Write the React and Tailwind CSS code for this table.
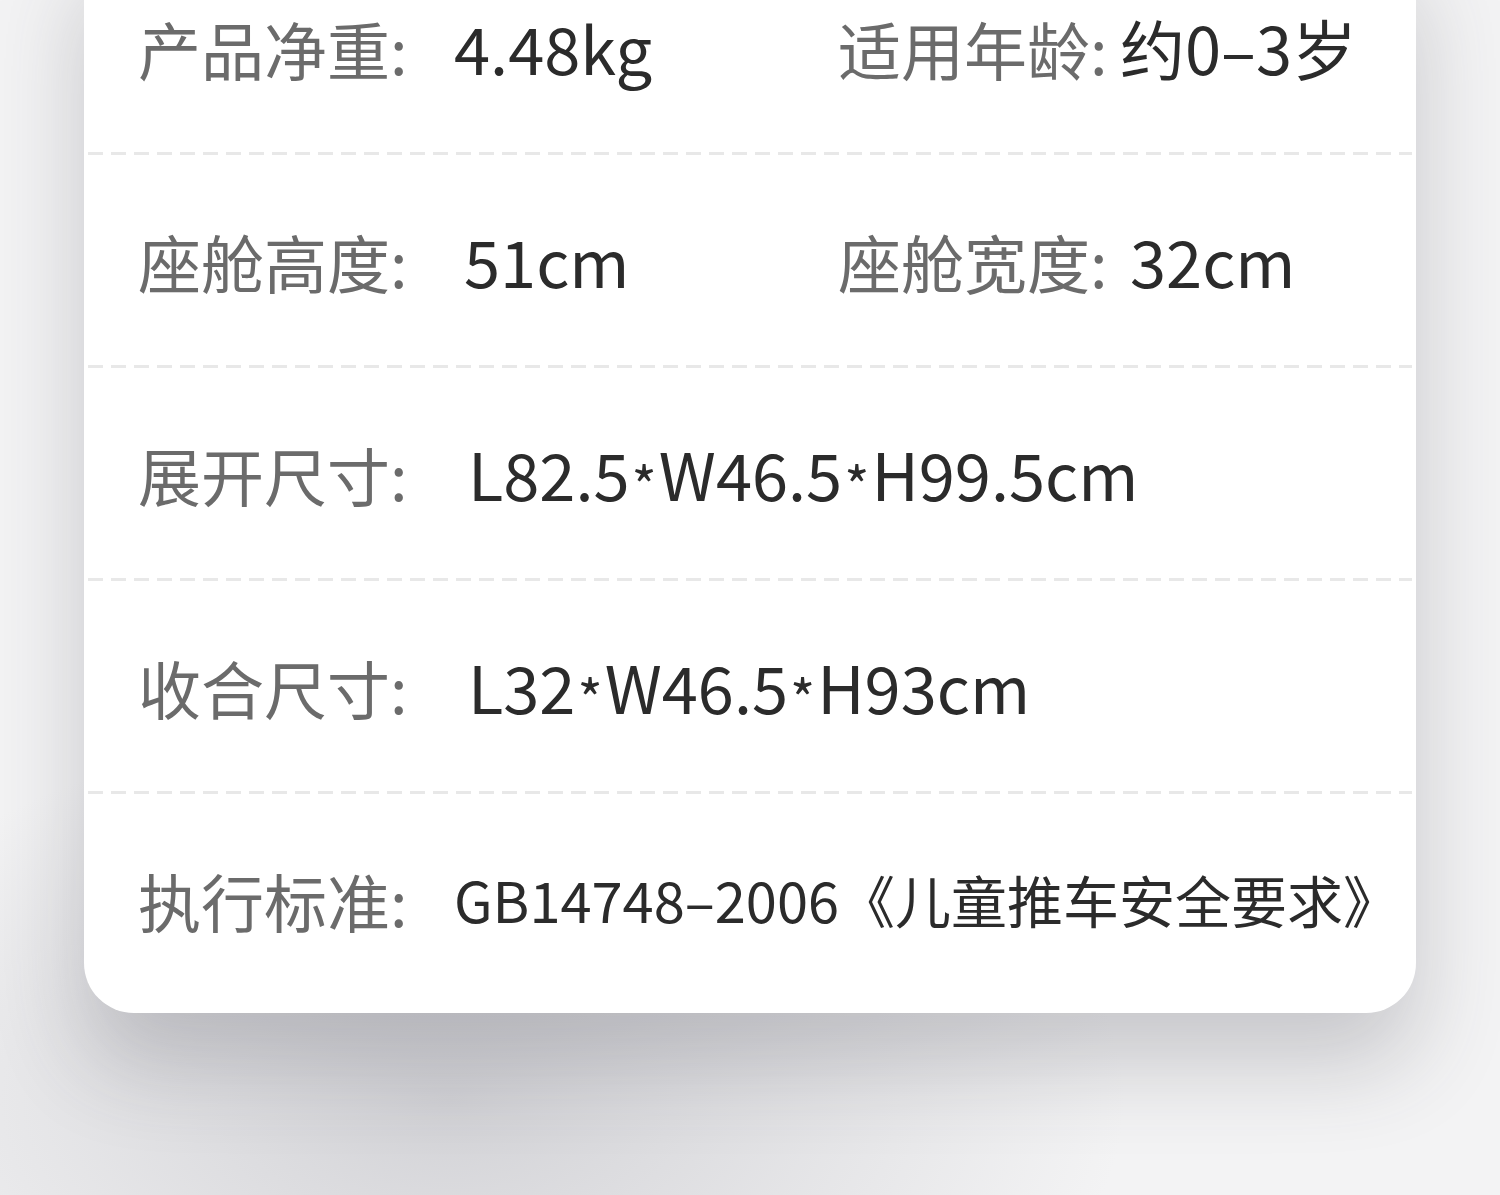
import React from 'react';

// small centered asterisk like the reference's "×" separator
function Star() {
    return <span className="inline-block text-[54px] px-[2px] translate-y-[6px]">*</span>;
}

const rows = [
    {
        cells: [
            { label: '产品净重:', value: '4.48kg', labelW: 'w-[316px]' },
            { label: '适用年龄:', value: '约0–3岁', labelW: 'w-[282px]' },
        ],
    },
    {
        cells: [
            { label: '座舱高度:', value: '51cm', labelW: 'w-[326px]' },
            { label: '座舱宽度:', value: '32cm', labelW: 'w-[292px]' },
        ],
    },
    { cells: [{ label: '展开尺寸:', value: ['L82.5', 'W46.5', 'H99.5cm'], labelW: 'w-[330px]' }] },
    { cells: [{ label: '收合尺寸:', value: ['L32', 'W46.5', 'H93cm'], labelW: 'w-[330px]' }] },
    { cells: [{ label: '执行标准:', value: 'GB14748–2006《儿童推车安全要求》', labelW: 'w-[316px]', small: true }] },
];

function DashedLine() {
    return (
        <div className="mx-[4px] h-[3px] bg-[repeating-linear-gradient(90deg,#e8e8e8_0px,#e8e8e8_15px,transparent_15px,transparent_23px)]" />
    );
}

function Cell({ label, value, labelW, small, first }) {
    return (
        <div className={`flex items-center ${first ? 'w-[700px]' : ''}`}>
            <span className={`${labelW} shrink-0 text-[63px] leading-none text-[#6b6b6b]`}>{label}</span>
            <span className={`${small ? 'text-[56px]' : 'text-[65px]'} leading-none text-[#2b2b2b] whitespace-nowrap`}>
                {Array.isArray(value)
                    ? value.map((part, k) => (
                          <React.Fragment key={k}>
                              {k > 0 && <Star />}
                              {part}
                          </React.Fragment>
                      ))
                    : value}
            </span>
        </div>
    );
}

export default function App() {
    return (
        <div className="w-[1500px] h-[1195px] overflow-hidden bg-[#f3f3f4] bg-[radial-gradient(ellipse_45%_32%_at_30%_92%,#d2d2d6_0%,rgba(210,210,214,0)_100%)] font-['Noto_Sans_CJK_SC','Noto_Sans',sans-serif]">
            <div className="mx-[84px] -mt-[58px] bg-white rounded-b-[50px] pb-[9px] shadow-[0_50px_90px_rgba(60,60,70,0.24)]">
                {rows.map((row, i) => (
                    <div key={i}>
                        <div className="h-[210px] flex items-center pl-[54px]">
                            {row.cells.map((c, j) => (
                                <Cell key={j} {...c} first={j === 0 && row.cells.length > 1} />
                            ))}
                        </div>
                        {i < rows.length - 1 && <DashedLine />}
                    </div>
                ))}
            </div>
        </div>
    );
}
